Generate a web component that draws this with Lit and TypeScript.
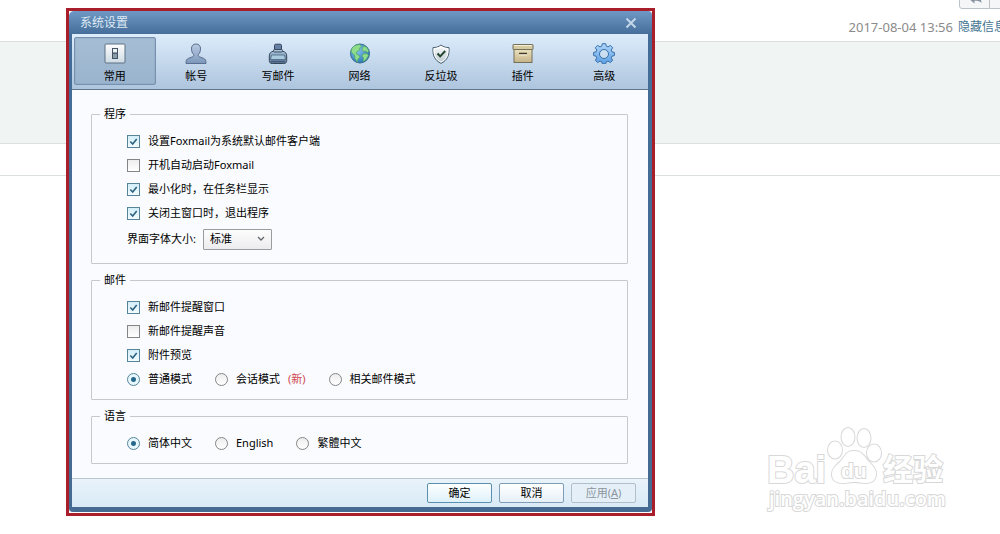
import { LitElement, html, css, svg } from "lit";
import { customElement, property } from "lit/decorators.js";

const icons = {
  general: svg`
    <defs><linearGradient id="g1" x1="0" y1="0" x2="0" y2="1"><stop offset="0" stop-color="#fdfdfd"/><stop offset="1" stop-color="#cfdbe4"/></linearGradient></defs>
    <rect x="1" y="1" width="20" height="19" rx="1" fill="url(#g1)" stroke="#5d7183"/>
    <rect x="8.500" y="5.500" width="5" height="10" fill="#8b9caa" stroke="#44535f"/>
    <rect x="9" y="6" width="4" height="3" fill="#edf2f5"/>
    <path d="M9 10.500h4" stroke="#55646f"/>`,
  account: svg`
    <defs><linearGradient id="g2" x1="0" y1="0" x2="0" y2="1"><stop offset="0" stop-color="#b9cbe3"/><stop offset="1" stop-color="#7c97ba"/></linearGradient></defs>
    <path d="M11 1C8 1 6.300 3 6.500 6c.1 2.300.7 4 1.900 5.300.7.900.4 2-.6 2.400L3.600 15.300C1.500 16.200 1 17.300 1 20.500h20c0-3.200-.5-4.300-2.600-5.200l-4.200-1.600c-1-.4-1.300-1.500-.6-2.400C14.800 10 15.400 8.300 15.500 6 15.700 3 14 1 11 1z" fill="url(#g2)" stroke="#5b7090"/>`,
  compose: svg`
    <defs><linearGradient id="g3" x1="0" y1="0" x2="0" y2="1"><stop offset="0" stop-color="#a9c2dc"/><stop offset="1" stop-color="#5d7898"/></linearGradient></defs>
    <path d="M7 8h8c3.500.7 4.700 2.500 4.700 5v4.500c0 2-1 3-3 3H5.300c-2 0-3-1-3-3V13C2.300 10.500 3.500 8.700 7 8z" fill="url(#g3)" stroke="#344558"/>
    <path d="M7.500 6.500v-4c0-.8.500-1.300 1.300-1.300h4.400c.8 0 1.300.5 1.300 1.300v4z" fill="#6780a5" stroke="#34435d"/>
    <rect x="6.500" y="6.500" width="9" height="2.500" rx="1" fill="#a9bfd6" stroke="#3d4e63"/>
    <path d="M4.500 12h13l1 4.500h-15z" fill="#a9cadf" stroke="#4c6580" stroke-width=".8"/>
    <path d="M4 18.500h14" stroke="#43597a" stroke-width="1.500"/>`,
  network: svg`
    <defs><radialGradient id="g4" cx=".35" cy=".3" r=".8"><stop offset="0" stop-color="#8bc9f0"/><stop offset="1" stop-color="#226eb0"/></radialGradient></defs>
    <circle cx="11" cy="10.500" r="9.500" fill="url(#g4)" stroke="#346b8e"/>
    <path d="M3 5C5 2.500 8 1.300 11 1.500l1.500 2-2 1.500.5 2-3 1.500-1 2 2.500 1.500 1.500 2-2 2-.7 3.300L6 15.500 5.500 12 2 9z" fill="#8fdc8b" stroke="#4ba36c" stroke-width=".7"/>
    <path d="M14.500 3l3 1 2.300 4-1.300 1.500-2-1.500-2 .5-1.500-2z M14 11l4-.5 1.500 2-2.500 4.300-3 1.700.5-3.500-1.500-2z" fill="#8fdc8b" stroke="#4ba36c" stroke-width=".7"/>`,
  spam: svg`
    <defs><linearGradient id="g5" x1="0" y1="0" x2="0" y2="1"><stop offset="0" stop-color="#fff"/><stop offset="1" stop-color="#b8c7cf"/></linearGradient></defs>
    <path d="M11 2c2.500 2 5 2.500 8 2.600.6 7.500-1.500 12.600-8 15.800C4.500 17.200 2.400 12.100 3 4.600 6 4.500 8.500 4 11 2z" fill="url(#g5)" stroke="#4c6270"/>
    <path d="M11 3.500c2.300 1.500 4.300 2 6.900 2.200.3 6.300-1.400 10.600-6.900 13.400C5.500 16.300 3.800 12 4.100 5.700 6.700 5.500 8.700 5 11 3.500z" fill="none" stroke="#fff"/>
    <path d="M7.500 10.500l2.700 2.900 5-5.400" fill="none" stroke="#23452f" stroke-width="2"/>`,
  plugin: svg`
    <defs><linearGradient id="g6" x1="0" y1="0" x2="0" y2="1"><stop offset="0" stop-color="#eee4c1"/><stop offset="1" stop-color="#c5b489"/></linearGradient></defs>
    <rect x="2" y="5.500" width="18" height="14" fill="url(#g6)" stroke="#736f58"/>
    <rect x="1" y="1.500" width="20" height="5" rx=".5" fill="#d6cba3" stroke="#736f58"/>
    <path d="M2 2.500h18" stroke="#f5efd9"/>
    <path d="M7 10.500h8" stroke="#3e3a2c" stroke-width="1.500"/>
    <path d="M7 12h8" stroke="#f5efd9"/>`,
  advanced: svg`
    <defs><linearGradient id="g7" x1="0" y1="0" x2="0" y2="1"><stop offset="0" stop-color="#b0d6fa"/><stop offset="1" stop-color="#5c9ee2"/></linearGradient></defs>
    <path fill-rule="evenodd" d="M9.300.7h3.400l.6 2.500 1.700.7 2.400-1.500 2.300 2.300-1.500 2.400.7 1.700 2.500.6v3.200l-2.500.6-.7 1.700 1.500 2.400-2.300 2.300-2.400-1.500-1.700.7-.6 2H9.300l-.6-2-1.700-.7-2.400 1.500-2.300-2.300 1.500-2.400-.7-1.700-2.500-.6V9.400l2.500-.6.700-1.700-1.500-2.400 2.300-2.300L7 3.900l1.700-.7z M11 6.500a4.500 4.500 0 1 0 0 9 4.500 4.500 0 1 0 0-9z" fill="url(#g7)" stroke="#366fa9"/>`,
};

@customElement("tool-tab")
class ToolTab extends LitElement {
  @property() label = "";
  @property() icon: keyof typeof icons = "general";
  @property({ type: Boolean }) active = false;

  static styles = css`
    :host { display: block; flex: 1; min-width: 0; }
    .tab {
      display: flex; flex-direction: column; align-items: center; gap: 4px;
      box-sizing: border-box; width: 100%; height: 48px; padding: 5px 0 0; margin: 0;
      border: 1px solid transparent; border-radius: 2px; background: none;
      font: 11px/16px "Noto Sans", "Noto Sans CJK SC", sans-serif; color: #000;
    }
    .active {
      border-color: #7591ad;
      background: linear-gradient(#a6bed4, #9ab4ce);
      box-shadow: inset 0 0 2px #819db8;
    }
    .icon { display: block; width: 22px; height: 21px; }
  `;

  render() {
    return html`<button class="tab ${this.active ? "active" : ""}" type="button">
      <svg class="icon" viewBox="0 0 22 21" aria-hidden="true">${icons[this.icon]}</svg>
      <span>${this.label}</span>
    </button>`;
  }
}

@customElement("app-root")
class AppRoot extends LitElement {
  static styles = css`
    :host {
      display: block; position: relative; min-height: 100vh; overflow: hidden;
      background: #fff; color: #000;
      font: 11px/16px "Noto Sans", "Noto Sans CJK SC", sans-serif;
    }
    .mail-head { display: flex; flex-direction: column; align-items: flex-end; height: 41px; overflow: hidden; }
    .reply-group { display: flex; height: 9px; align-items: flex-end; overflow: hidden; }
    .reply {
      display: flex; align-items: flex-end; box-sizing: border-box; width: 31px; height: 22px; padding: 0 7px 4px;
      border: 1px solid #bcc2c7; border-radius: 0 0 0 3px; background: #f4f6f8;
    }
    .more { width: 10px; height: 22px; padding: 0; border: 1px solid #bcc2c7; border-width: 0 0 1px; background: #f4f6f8; }
    .meta { display: flex; gap: 5px; margin: 8px -6px 0 0; line-height: 20px; font-size: 12px; white-space: nowrap; }
    .date { font-size: 13px; color: #8b8b8b; }
    .link { color: #447591; text-decoration: none; }
    .band { height: 101px; background: #f0f4f3; border: 1px solid #dcdfe0; border-width: 1px 0; }
    .strip { height: 31px; border-bottom: 1px solid #dcdfe0; }

    .window {
      position: absolute; left: 66px; top: 8px; box-sizing: border-box; width: 589px;
      border: 3px solid #a81e2a; background: #fff;
    }
    .frame {
      padding: 0 4px 5px 3px; margin-bottom: 1px; border-radius: 5px 4px 4px 4px;
      background: linear-gradient(#6f98c4, #436d98 24px, #466b92);
    }
    .title { display: flex; align-items: center; justify-content: space-between; height: 23px; padding: 0 11px 0 8px; color: #dfeaf5; font-size: 12px; }
    .close { display: flex; padding: 0; border: 0; background: none; }
    .tabs {
      display: flex; height: 49px; padding: 3px 3px 3px 2px; border-bottom: 1px solid #61778f;
      background: linear-gradient(#dcecfb, #aec5de);
    }
    .body { padding: 16px 20px 14px 19px; background: #f9fbfe; }
    .group { min-width: 0; margin: 0; padding: 7px 12px 8px 35px; border: 1px solid #c6c8cb; border-radius: 1px; }
    .group + .group { margin-top: 8px; }
    .legend { margin-left: -27px; padding: 0 4px; }
    .row { display: flex; align-items: center; height: 24px; gap: 23px; }
    .select-row { height: 28px; gap: 7px; padding-bottom: 2px; }
    .option { display: flex; align-items: center; gap: 8px; white-space: nowrap; }
    .box, .radio {
      appearance: none; box-sizing: border-box; flex: none; width: 13px; height: 13px; margin: 0;
      border: 1px solid #858585; background: linear-gradient(#ededee, #fff);
    }
    .radio { border-radius: 50%; }
    .box:checked {
      border-color: #568499;
      background: url("data:image/svg+xml,%3Csvg xmlns='http://www.w3.org/2000/svg' viewBox='0 0 11 11'%3E%3Cpath d='M2.300 5.500l2.400 2.500 4-5' fill='none' stroke='%232d6480' stroke-width='1.600'/%3E%3C/svg%3E"), linear-gradient(#d4eef8, #f3fbfe);
    }
    .radio:checked { border-color: #568499; background: radial-gradient(circle, #28688b 0 2px, #e7f7fd 3px); }
    .new { color: #d04a50; }
    .select-wrap { position: relative; display: flex; align-items: center; }
    .select {
      appearance: none; box-sizing: border-box; width: 69px; height: 21px; padding: 0 6px; margin: 0;
      border: 1px solid #9a9da0; border-radius: 1px; background: linear-gradient(#fdfdfd, #ececee);
      font: inherit; color: inherit;
    }
    .chevron { position: absolute; right: 7px; pointer-events: none; }
    .footer {
      display: flex; justify-content: flex-end; gap: 7px; padding: 4px 12px 4px 11px; border-top: 1px solid #b9c5d0;
      background: linear-gradient(#e9f3fa, #d9eaf6);
    }
    .btn {
      box-sizing: border-box; width: 65px; height: 20px; padding: 0; margin: 0;
      border: 1px solid #7e9db7; border-radius: 2px; background: linear-gradient(#fff, #e6f0f7);
      font: inherit; line-height: 18px; color: #000;
    }
    .primary { border-color: #5b8fae; background: linear-gradient(#fdffff, #dff1fa); }
    .btn:disabled { border-color: #b1bfcb; background: #e5eff7; color: #8a959e; }
    .key { text-decoration: underline; }
    .watermark { position: absolute; right: 46px; top: 420px; width: 190px; height: 96px; }
    .wm { fill: #fff; stroke: #d8d8d8; stroke-width: 2px; paint-order: stroke; }
    .brand { font: bold 38px "Liberation Sans", sans-serif; }
    .du { font: bold 21px "Liberation Sans", sans-serif; }
    .cn { font: bold 30px "Noto Sans CJK SC", sans-serif; }
    .url { font: 600 20px "Open Sans", sans-serif; }
  `;

  private tabs = [
    ["general", "常用"], ["account", "帐号"], ["compose", "写邮件"], ["network", "网络"],
    ["spam", "反垃圾"], ["plugin", "插件"], ["advanced", "高级"],
  ];

  private check(label: string, on: boolean) {
    return html`<div class="row"><label class="option"><input class="box" type="checkbox" .checked=${on} />${label}</label></div>`;
  }

  private radio(name: string, label: unknown, on = false) {
    return html`<label class="option"><input class="radio" type="radio" name=${name} .checked=${on} />${label}</label>`;
  }

  render() {
    return html`
      <header class="mail-head">
        <div class="reply-group">
          <button class="reply" type="button" aria-label="回复">
            <svg width="16" height="14" viewBox="0 0 16 14"><path d="M1 8l7-7v4c5 0 7 3 7.500 8.500C14 11.500 12 11 8 11v3z" fill="#8793a0"/></svg>
          </button>
          <button class="more" type="button" aria-label="更多"></button>
        </div>
        <div class="meta"><span class="date">2017-08-04 13:56</span><a class="link" href="#">隐藏信息</a></div>
      </header>
      <div class="band"></div>
      <div class="strip"></div>

      <svg class="watermark" viewBox="0 0 190 96">
        <text class="wm brand" x="3" y="63">Bai</text>
        <g class="wm">
          <ellipse cx="71" cy="30" rx="7" ry="8.500"/>
          <ellipse cx="84" cy="17" rx="6.500" ry="9"/>
          <ellipse cx="100" cy="18" rx="6.500" ry="9"/>
          <ellipse cx="110" cy="33" rx="7" ry="8.500"/>
          <path d="M90 31c8 0 10 5 14 10 5 5 9 9 8 14-1 7-6 8-11 8-4 0-6-1-11-1s-6 1-10 1c-6 0-12-1-12-9 0-6 5-9 9-13 4-5 5-10 13-10z"/>
        </g>
        <text class="wm du" x="77" y="58">du</text>
        <text class="wm cn" x="119" y="60">经验</text>
        <text class="wm url" x="5" y="86">jingyan.baidu.com</text>
      </svg>

      <section class="window" role="dialog" aria-label="系统设置">
        <div class="frame">
          <div class="title">
            <span>系统设置</span>
            <button class="close" type="button" aria-label="关闭">
              <svg width="12" height="12" viewBox="0 0 12 12"><path d="M1.500 1.500l9 9m0-9l-9 9" stroke="#c3d6e9" stroke-width="2"/></svg>
            </button>
          </div>
          <nav class="tabs">
            ${this.tabs.map(([icon, label], i) => html`<tool-tab icon=${icon} label=${label} ?active=${i === 0}></tool-tab>`)}
          </nav>
          <div class="body">
            <fieldset class="group">
              <legend class="legend">程序</legend>
              ${this.check("设置Foxmail为系统默认邮件客户端", true)}
              ${this.check("开机自动启动Foxmail", false)}
              ${this.check("最小化时，在任务栏显示", true)}
              ${this.check("关闭主窗口时，退出程序", true)}
              <div class="row select-row">
                <label for="size">界面字体大小:</label>
                <span class="select-wrap">
                  <select class="select" id="size"><option>标准</option></select>
                  <svg class="chevron" width="8" height="6" viewBox="0 0 8 6"><path d="M1 1l3 3 3-3" fill="none" stroke="#62676c" stroke-width="1.300"/></svg>
                </span>
              </div>
            </fieldset>
            <fieldset class="group">
              <legend class="legend">邮件</legend>
              ${this.check("新邮件提醒窗口", true)}
              ${this.check("新邮件提醒声音", false)}
              ${this.check("附件预览", true)}
              <div class="row">
                ${this.radio("mode", "普通模式", true)}
                ${this.radio("mode", html`<span>会话模式</span><span class="new">(新)</span>`)}
                ${this.radio("mode", "相关邮件模式")}
              </div>
            </fieldset>
            <fieldset class="group">
              <legend class="legend">语言</legend>
              <div class="row">
                ${this.radio("lang", "简体中文", true)}
                ${this.radio("lang", "English")}
                ${this.radio("lang", "繁體中文")}
              </div>
            </fieldset>
          </div>
          <footer class="footer">
            <button class="btn primary" type="button">确定</button>
            <button class="btn" type="button">取消</button>
            <button class="btn" type="button" disabled>应用(<span class="key">A</span>)</button>
          </footer>
        </div>
      </section>
    `;
  }
}
